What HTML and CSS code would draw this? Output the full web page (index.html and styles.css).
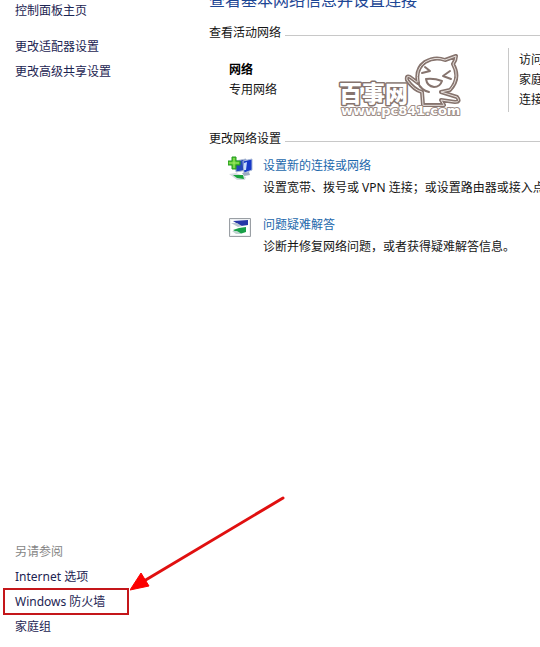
FILE: index.html
```html
<!DOCTYPE html>
<html lang="zh-CN">
<head>
<meta charset="utf-8">
<title>网络</title>
<link rel="stylesheet" href="styles.css">
</head>
<body>
<div class="window">
  <aside class="sidebar">
    <nav class="tasks">
      <a class="home" href="#">控制面板主页</a>
      <a href="#">更改适配器设置</a>
      <a href="#">更改高级共享设置</a>
    </nav>
    <nav class="related">
      <h2 class="related-title">另请参阅</h2>
      <a href="#">Internet 选项</a>
      <a class="marked" href="#">Windows 防火墙
        <svg class="arrow" width="158" height="98" viewBox="0 0 158 98" aria-hidden="true">
          <path d="M153 4 14 87" fill="none" stroke="#e01010" stroke-width="3" stroke-linecap="round"/>
          <path d="M0 96 11 79 19 92Z" fill="#fb0000" stroke="#fb0000"/>
        </svg>
      </a>
      <a href="#">家庭组</a>
    </nav>
  </aside>
  <main class="content">
    <h1 class="title">查看基本网络信息并设置连接</h1>
    <section>
      <h2 class="section-title">查看活动网络</h2>
      <div class="network">
        <div class="network-name"><strong>网络</strong><span>专用网络</span></div>
        <svg class="logo" width="124" height="66" viewBox="0 0 124 66">
          <g fill="none" stroke-linejoin="round" stroke-linecap="round">
            <path d="M85 52 84 39Q76 37 69 27Q68 22 72 24L80 30Q77 16 87 9Q97 3 107 7L118 3Q118 7 115 11Q123 25 112 37L103 39 119 44Q123 49 117 49L103 47 106 52Z" fill="#fff" stroke="#86746e" stroke-width="4"/>
            <path d="M85 52 84 39Q76 37 69 27Q68 22 72 24L80 30Q77 16 87 9Q97 3 107 7L118 3Q118 7 115 11Q123 25 112 37L103 39 119 44Q123 49 117 49L103 47 106 52Z" stroke="#e6dfdb"/>
            <path d="M80 30Q83 37 91 39M87 14 92 18 84 20M112 18 105 23 113 26M88 26Q96 25 104 28Q102 34 96 34Q89 33 88 26" stroke="#86746e" stroke-width="2"/>
          </g>
          <text class="logo-name" x="1" y="49">百事网</text>
          <text class="logo-url" x="3" y="62">www.pc841.com</text>
        </svg>
        <div class="details"><span>访问</span><span>家庭</span><span>连接</span></div>
      </div>
    </section>
    <section>
      <h2 class="section-title">更改网络设置</h2>
      <div class="options">
        <div class="option">
          <svg width="25" height="26" viewBox="0 0 25 26" aria-hidden="true">
            <path d="M7 5 18 3 19 14 8 16Z" fill="#2448b8" stroke="#b4bfd4"/>
            <path d="M15 5 24 3 24 14 16 17Z" fill="#1739c8" stroke="#a9b9d8"/>
            <path d="M16 7 19 6 18 14 16 14Z" fill="#c7dcff"/>
            <path d="M14 17 21 16 22 19 16 20Z" fill="#9eabc0"/>
            <path d="M1 18 8 17 18 21 17 24 9 24Z" fill="#d5dce0"/>
            <path d="M5 19 15 19 16 23 9 22Z" fill="#18a33b"/>
            <path d="M4 1H8V5H12V9H8V13H4V9H0V5H4Z" fill="#55c52e" stroke="#239a20"/>
            <path d="M6 2V12M1 7H11" stroke="#a6ec69"/>
          </svg>
          <div>
            <a href="#">设置新的连接或网络</a>
            <p>设置宽带、拨号或 VPN 连接；或设置路由器或接入点</p>
          </div>
        </div>
        <div class="option">
          <svg width="25" height="26" viewBox="0 0 25 26" aria-hidden="true">
            <path d="M1.500 3.500H22.500V21.500H1.500Z" fill="#eef1f3" stroke="#9a9fa4"/>
            <path d="M3 5H21V20H3Z" fill="#fff"/>
            <path d="M5 6 20 5 20 10 13 11Z" fill="#2638a8"/>
            <path d="M3 8 9 8 14 11 10 12Z" fill="#b8c5d2"/>
            <path d="M5 15 11 13 18 12 18 17 12 19Z" fill="#18a048"/>
            <path d="M4 16 9 16 14 19 8 19Z" fill="#bfd4d0"/>
          </svg>
          <div>
            <a href="#">问题疑难解答</a>
            <p>诊断并修复网络问题，或者获得疑难解答信息。</p>
          </div>
        </div>
      </div>
    </section>
  </main>
</div>
</body>
</html>
```
FILE: styles.css
```css
* { box-sizing: border-box; }

body {
  margin: 0;
  background: #fff;
  color: #151515;
  font: 12px/20px "Noto Sans", "Noto Sans CJK SC", sans-serif;
  overflow: hidden;
}

a { color: #1c2452; text-decoration: none; }
h1, h2, p { margin: 0; font-weight: normal; }

.window {
  display: grid;
  grid-template-columns: 209px minmax(0, 1fr);
  min-height: 100vh;
}

.sidebar {
  display: flex;
  flex-direction: column;
  justify-content: space-between;
  padding: 1px 15px 10px;
}

.tasks, .related {
  display: flex;
  flex-direction: column;
  align-items: flex-start;
  gap: 5px;
}

.home { margin-bottom: 11px; }
.related-title { color: #858585; font-size: 12px; }
.marked { position: relative; }

.marked::after {
  content: "";
  position: absolute;
  inset: -4px -24px -3px -12px;
  border: 2px solid #c4161a;
}

.arrow {
  position: absolute;
  left: 115px;
  bottom: 20px;
}

.content { white-space: nowrap; }

.title {
  margin: -10px 0 13px;
  color: #1d4694;
  font-size: 16px;
}

.section-title {
  display: flex;
  gap: 4px;
  font-size: 12px;
}

.section-title::after {
  content: "";
  flex: 1;
  height: 1px;
  margin-top: 12px;
  background: #c8c8c8;
}

.network {
  display: grid;
  grid-template-columns: 109px 124px 1fr;
  padding: 5px 0 10px 20px;
}

.network-name, .details {
  display: flex;
  flex-direction: column;
}

.network-name { padding-top: 12px; }
.network-name strong { color: #000; }

.logo { margin-top: 5px; }

.logo-name {
  font: 900 23px "Noto Sans CJK SC", sans-serif;
  fill: #fff;
  stroke: #86746e;
  stroke-width: 3px;
  stroke-linejoin: round;
  paint-order: stroke;
}

.logo-url {
  font: bold 13px "DejaVu Sans", sans-serif;
  fill: #fff;
  stroke: #9b8b85;
  stroke-width: 2px;
  stroke-linejoin: round;
  paint-order: stroke;
}

.details {
  align-self: start;
  height: 64px;
  margin-left: 46px;
  padding: 2px 0 0 10px;
  border-left: 1px solid #c8c8c8;
  overflow: hidden;
}

.options {
  display: flex;
  flex-direction: column;
  gap: 17px;
  padding: 7px 0 0 19px;
}

.option { display: flex; gap: 10px; }
.option svg { flex: none; }
.option a { display: block; margin-bottom: 2px; color: #1c68ac; }
```
